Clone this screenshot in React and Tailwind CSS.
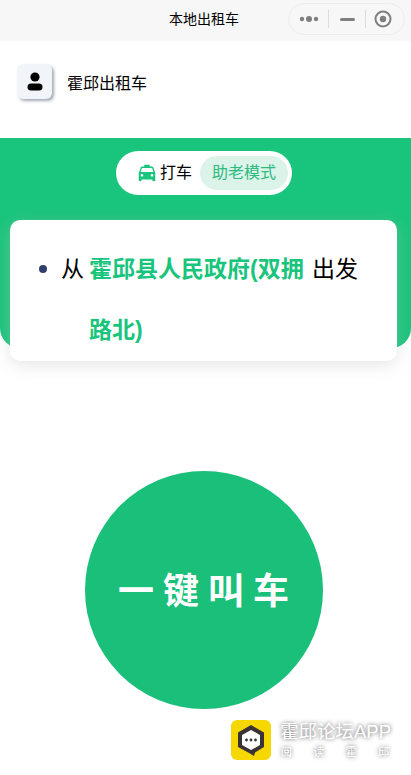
import { MdLocalTaxi } from 'react-icons/md';

function CapsuleMenu() {
  return (
    <div className="absolute left-[288px] top-[3px] flex h-[32px] w-[117px] items-center rounded-full border border-[#ececec] bg-[#f7f7f7]">
      <div className="flex w-[39px] items-center justify-center">
        <svg width="20" height="8" viewBox="0 0 20 8" fill="#7f7f7f">
          <circle cx="3" cy="4" r="2.2" />
          <circle cx="10" cy="4" r="3" />
          <circle cx="17" cy="4" r="2.2" />
        </svg>
      </div>
      <div className="h-[18px] w-px bg-[#dcdcdc]" />
      <div className="flex w-[36px] items-center justify-center">
        <div className="h-[3px] w-[15px] rounded-full bg-[#7f7f7f]" />
      </div>
      <div className="h-[18px] w-px bg-[#dcdcdc]" />
      <div className="flex flex-1 items-center justify-center pr-[4px]">
        <svg width="18" height="18" viewBox="0 0 18 18">
          <circle cx="9" cy="9" r="7.5" fill="none" stroke="#7f7f7f" strokeWidth="2" />
          <circle cx="9" cy="9" r="3.2" fill="#7f7f7f" />
        </svg>
      </div>
    </div>
  );
}

function UserIcon() {
  return (
    <svg width="16" height="19" viewBox="0 0 16 19" fill="#000">
      <circle cx="8" cy="5" r="4.6" />
      <rect x="0.5" y="11.5" width="15" height="7" rx="3.5" />
    </svg>
  );
}

function ForumLogo() {
  return (
    <svg width="40" height="40" viewBox="0 0 40 40">
      <rect width="40" height="40" rx="6" fill="#f7d700" />
      <path d="M20 5 L33 12.5 V27 L24 32.5 L23 36 L19 33.5 L7 27 V12.5 Z" fill="#3a3335" />
      <path d="M20 11 L28 15.5 V24.5 L20 29 L12 24.5 V15.5 Z" fill="#fff" stroke="#fff" strokeWidth="2" strokeLinejoin="round" />
      <circle cx="15.5" cy="20" r="1.4" fill="#3a3335" />
      <circle cx="20" cy="20" r="1.4" fill="#3a3335" />
      <circle cx="24.5" cy="20" r="1.4" fill="#3a3335" />
    </svg>
  );
}

export default function App() {
  return (
    <div className="relative h-[775px] w-[411px] overflow-hidden bg-white font-['Liberation_Sans','Noto_Sans_CJK_SC',sans-serif] text-black">
      {/* nav bar */}
      <div className="flex h-[41px] items-center justify-center bg-[#f7f7f7] pb-[3px] pr-[3px] text-[14px]">
        本地出租车
      </div>
      <CapsuleMenu />

      {/* user row */}
      <div className="flex h-[97px] items-start gap-[15px] pl-[17px] pt-[23px]">
        <div className="flex h-[35px] w-[35px] items-center justify-center rounded-[6px] bg-[#f1f5f9] shadow-[2px_2px_3px_rgba(90,100,120,0.55)]">
          <UserIcon />
        </div>
        <span className="pt-[9px] text-[16px] leading-[22px]">霍邱出租车</span>
      </div>

      {/* green banner */}
      <div className="flex h-[210px] justify-center rounded-b-[20px] bg-[#19c47c] pr-[3px] pt-[13px]">
        <div className="flex h-[44px] w-[176px] items-center rounded-full bg-white pl-[20px]">
          <MdLocalTaxi className="text-[#19c47c]" size={22} />
          <span className="ml-[2px] text-[16px]">打车</span>
          <span className="ml-[8px] flex h-[34px] w-[88px] items-center justify-center rounded-full bg-[#dcf3e9] text-[16px] text-[#2dbb80]">
            助老模式
          </span>
        </div>
      </div>

      {/* start point card */}
      <div className="relative mx-[10px] mt-[-128px] flex h-[141px] w-[387px] items-start rounded-[10px] bg-white pl-[29px] pt-[19px] text-[23px] leading-[61px] shadow-[0_4px_16px_rgba(190,190,190,0.4)]">
        <span className="mr-[14px] mt-[26px] h-[8px] w-[8px] shrink-0 rounded-full bg-[#2f3e6e]" />
        <span className="mr-[5px] shrink-0">从</span>
        <span className="w-[216px] shrink-0 font-bold text-[#19c47c]">霍邱县人民政府(双拥路北)</span>
        <span className="ml-[7px] shrink-0">出发</span>
      </div>

      {/* call button */}
      <div className="mt-[110px] flex justify-center pr-[3px]">
        <button className="flex h-[238px] w-[238px] items-center justify-center rounded-full bg-[#1abf7a] pl-[8px] pt-[4px] text-[36px] font-bold tracking-[9px] text-white">
          一键叫车
        </button>
      </div>

      {/* watermark */}
      <div className="absolute left-[231px] top-[720px] flex items-center gap-[9px]">
        <ForumLogo />
        <div className="text-white [text-shadow:0_0_4px_#555]">
          <div className="text-[18.5px] leading-[22px] whitespace-nowrap">霍邱论坛APP</div>
          <div className="mt-[2px] flex w-[110px] justify-between px-[1px] text-[11px] leading-[14px]">
            <span>阅</span>
            <span>读</span>
            <span>霍</span>
            <span>邱</span>
          </div>
        </div>
      </div>
    </div>
  );
}
